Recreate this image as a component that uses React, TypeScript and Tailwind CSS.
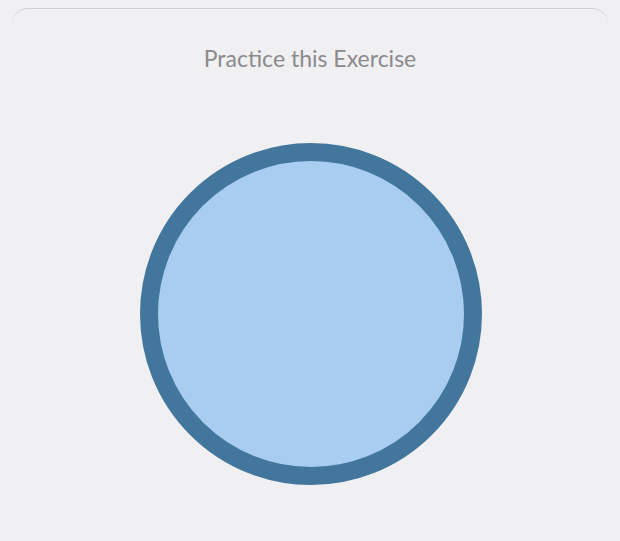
export default function App() {
  return (
    <div className="w-[620px] h-[541px] bg-[#f0f0f2] overflow-hidden pt-[8px] px-[12px]">
      <div className="h-full border-t border-[#cfcfd2] rounded-t-[16px] flex flex-col items-center">
        <h1 className="mt-[34px] text-[23px] leading-[30px] text-[#8a8a8c] font-['Lato',sans-serif]">
          Practice this Exercise
        </h1>
        <div className="mt-[70px] ml-[1px] w-[342px] h-[342px] rounded-full bg-[#a8cdf1] border-[18px] border-[#42769c]" />
      </div>
    </div>
  );
}
